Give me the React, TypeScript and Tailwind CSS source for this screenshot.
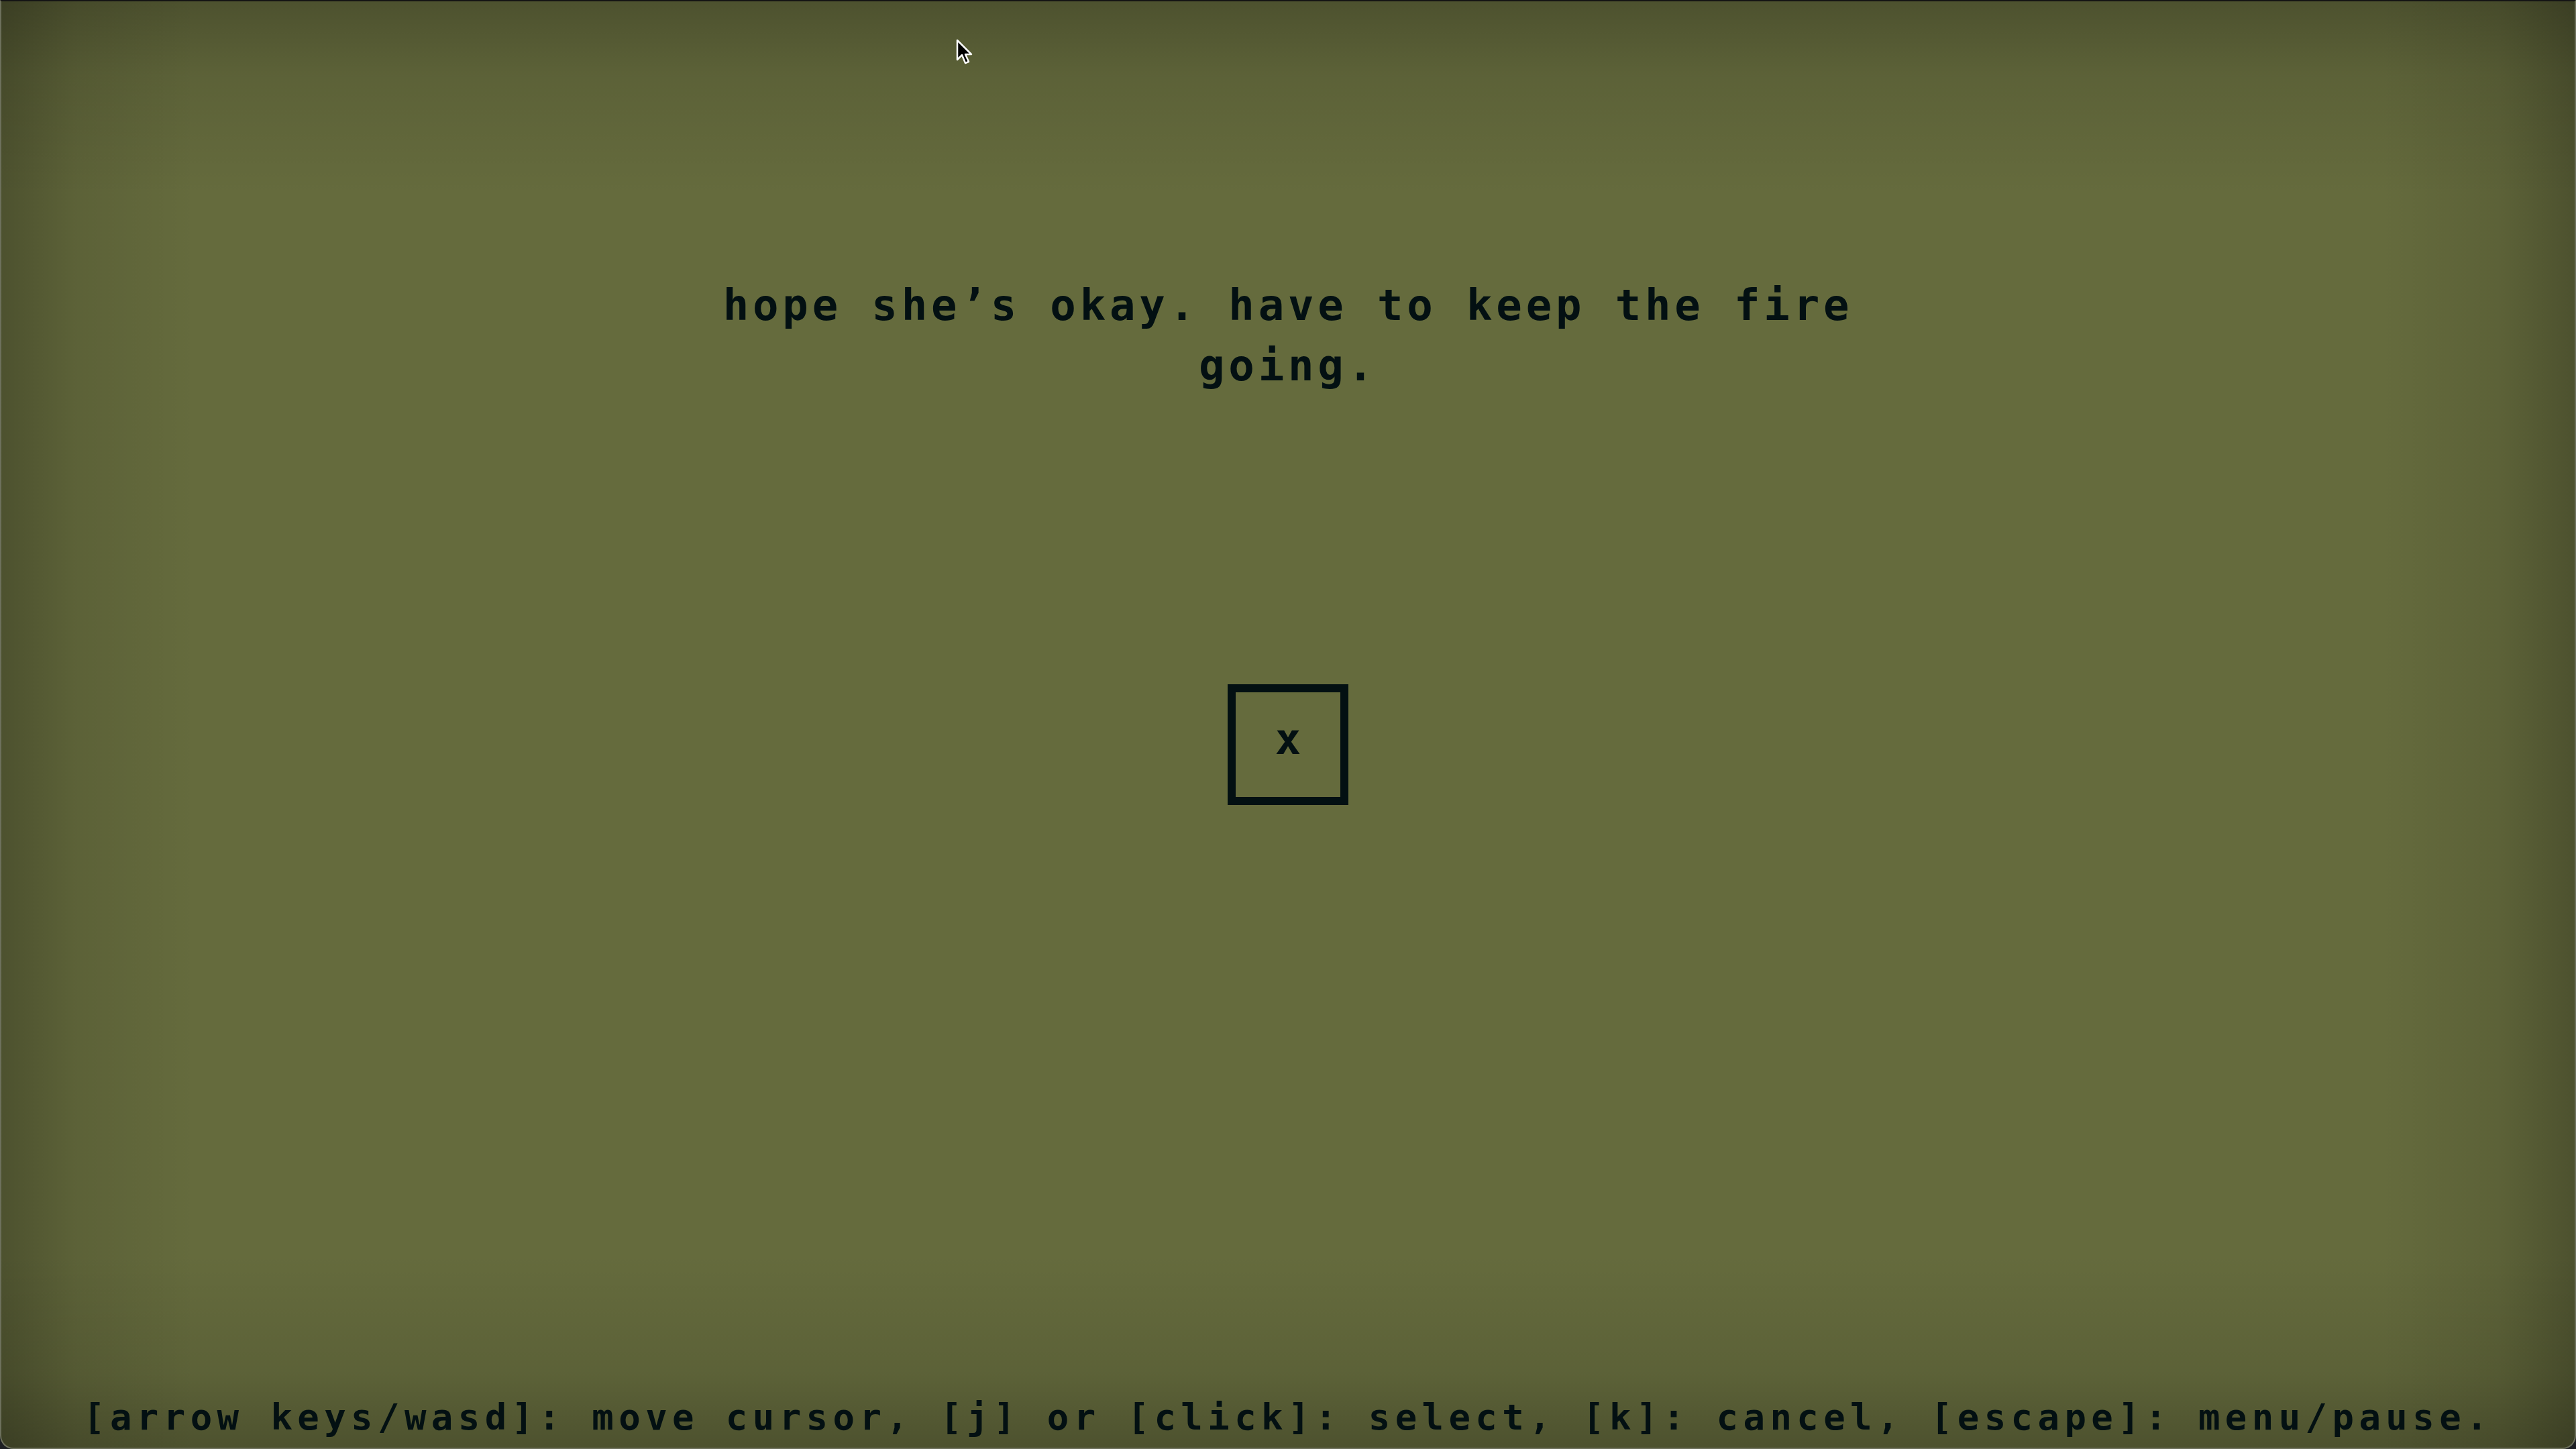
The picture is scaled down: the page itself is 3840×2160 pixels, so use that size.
export default function App() {
  return (
    <div className="h-screen w-screen overflow-hidden bg-[#1d1f23]">
      <div className="relative flex h-full w-full flex-col items-center rounded-b-[20px] border-2 border-x-[#6d705c] border-b-[#6d705c] border-t-[#141414] bg-[#656b3d] bg-[linear-gradient(to_bottom,rgba(0,0,0,0.24),rgba(0,0,0,0.09)_110px,rgba(0,0,0,0)_290px),linear-gradient(to_top,rgba(0,0,0,0.24),rgba(0,0,0,0.09)_110px,rgba(0,0,0,0)_290px),linear-gradient(to_right,rgba(0,0,0,0.24),rgba(0,0,0,0.09)_110px,rgba(0,0,0,0)_290px),linear-gradient(to_left,rgba(0,0,0,0.24),rgba(0,0,0,0.09)_110px,rgba(0,0,0,0)_290px)] font-['DejaVu_Sans_Mono',monospace] font-bold text-[#031012]">
        <div className="pt-[408px] text-center text-[64px] leading-[90px] tracking-[5.8px]">
          <div>hope she’s okay. have to keep the fire</div>
          <div>going.</div>
        </div>
        <div className="mt-[430px] flex h-[180px] w-[180px] items-center justify-center border-[12px] border-[#031012] pb-[16px] text-[64px] leading-none">
          x
        </div>
        <div className="mt-auto mb-[15px] text-[54px] leading-[60px] tracking-[7.4px] whitespace-nowrap">
          [arrow keys/wasd]: move cursor, [j] or [click]: select, [k]: cancel, [escape]: menu/pause.
        </div>
        <svg
          className="absolute left-[1423px] top-[56px]"
          width="26"
          height="40"
          viewBox="0 0 26 40"
        >
          <path
            d="M2 2 L2 31 L9 24 L14 36 L19 34 L14 23 L23 23 Z"
            fill="#000"
            stroke="#fff"
            strokeWidth="2.5"
            strokeLinejoin="round"
          />
        </svg>
      </div>
    </div>
  );
}
